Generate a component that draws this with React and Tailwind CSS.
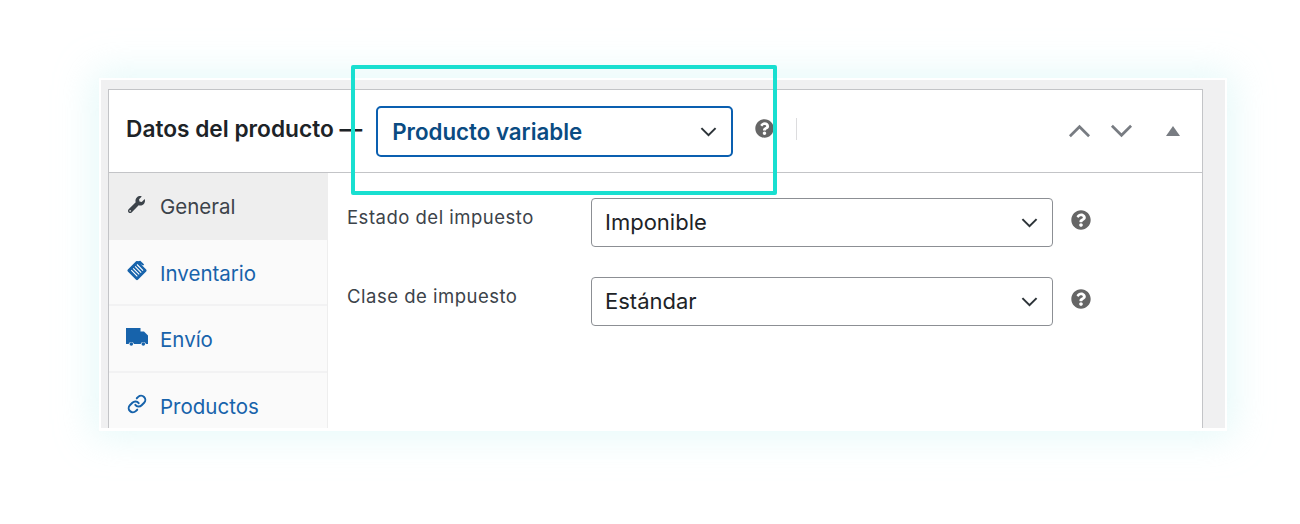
import React from "react";
import { FaWrench, FaQuestionCircle } from "react-icons/fa";
import { Link } from "lucide-react";

const Chevron = ({ className, up }) => (
  <svg viewBox="0 0 24 14" className={className} fill="none" stroke="currentColor" strokeWidth="2.8">
    <path d={up ? "M2 12.5 12 2.500l10 10" : "M2 1.500l10 10 10-10"} />
  </svg>
);

const SelectBox = ({ label }) => (
  <div className="flex h-[49px] w-[462px] items-center justify-between rounded-[4px] border border-[#8c8f94] bg-white pl-[13px] pr-[14px] text-[22px] text-[#1d2327]">
    <span>{label}</span>
    <Chevron className="h-[10px] w-[17px] text-[#2c3338]" />
  </div>
);

const Row = ({ label, value }) => (
  <div className="flex items-start">
    <div className="w-[244px] pt-[7px] text-[18.500px] leading-[24px] tracking-[0.5px] text-[#3c434a]">{label}</div>
    <SelectBox label={value} />
    <FaQuestionCircle className="ml-[18px] mt-[12px] text-[20px] text-[#666]" />
  </div>
);

const TagIcon = () => (
  <svg viewBox="0 0 20 20" className="h-[22px] w-[22px]">
    <rect x="3.500" y="4" width="13" height="13" rx="1.200" transform="rotate(45 10 10.500)" fill="#1763ab" />
    <path d="M9 2.500 13 1.500l3.500 3.500-1 1z" fill="#1763ab" />
    <path d="m6.500 8.500 5.500 5.500M8.300 6.800l5.500 5.500M10 5l5.500 5.500M4.800 10.200l5.500 5.500" stroke="#fff" strokeWidth="1" fill="none" />
  </svg>
);

const TruckIcon = () => (
  <svg viewBox="0 0 22 18" className="h-[18px] w-[22px]" fill="#1763ab">
    <path d="M0 0h14.500v3.500h3.500L22 7.500v8.500h-2a2.800 2.800 0 0 0-5.400 0H8a2.800 2.800 0 0 0-5.400 0H0z" />
    <circle cx="5.300" cy="16" r="1.800" />
    <circle cx="17.300" cy="16" r="1.800" />
  </svg>
);

const NavItem = ({ icon, label, active, h, noBorder, textClass }) => (
  <div
    className={`flex items-center text-[20.500px] ${h} ${active ? "bg-[#eeeeee] text-[#3c434a]" : "text-[#1763ab]"} ${
      noBorder ? "" : "border-b-2 border-[#f2f2f3]"
    }`}
  >
    <div className="flex w-[51px] -translate-y-[2px] justify-center pl-[4px]">{icon}</div>
    <span className={textClass}>{label}</span>
  </div>
);

export default function App() {
  return (
    <div className="relative h-[524px] w-[1300px] overflow-hidden bg-white font-['Inter',sans-serif]">
      <div className="pl-[99px] pt-[78px]">
        <div className="h-[353px] w-[1128px] overflow-hidden border-x-2 border-b-[3px] border-t-2 border-white bg-[#f0f0f1] pl-[7px] pt-[9px] shadow-[0_0_36px_6px_rgba(190,240,240,0.4)]">
          <div className="h-[345px] w-[1095px] border border-[#c3c4c7] bg-white">
            <div className="flex h-[83px] items-center border-b border-[#c3c4c7] pl-[17px]">
              <div className="-translate-y-[2px] whitespace-nowrap text-[22.700px] font-semibold text-[#1d2327]">Datos del producto —</div>
              <div className="ml-[14px] flex h-[51px] w-[357px] items-center justify-between rounded-[5px] border-2 border-[#0a5fb0] pl-[14px] pr-[14px] text-[22.300px] font-semibold text-[#0a4b82]">
                <span className="translate-y-[1px]">Producto variable</span>
                <Chevron className="h-[10px] w-[17px] translate-y-[1px] text-[#2c3338]" />
              </div>
              <FaQuestionCircle className="ml-[22px] -translate-y-[3px] text-[19px] text-[#666]" />
              <div className="ml-[22px] h-[22px] w-px -translate-y-[2px] bg-[#dcdcde]" />
              <div className="ml-auto flex items-center pr-[22px] text-[#787c82]">
                <Chevron up className="h-[14px] w-[23px]" />
                <Chevron className="ml-[19px] h-[14px] w-[23px]" />
                <div className="ml-[33px] h-0 w-0 border-x-[7px] border-b-[10px] border-x-transparent border-b-[#787c82]" />
              </div>
            </div>
            <div className="flex">
              <div className="w-[219px] shrink-0 border-r border-[#eeeeee] bg-[#fafafa]">
                <NavItem active h="h-[67px]" noBorder textClass="translate-y-[1px]" label="General" icon={<FaWrench className="text-[17px] text-[#3c434a]" />} />
                <NavItem h="h-[66px]" textClass="translate-y-[2px]" label="Inventario" icon={<TagIcon />} />
                <NavItem h="h-[67px]" textClass="translate-y-[2px]" label="Envío" icon={<TruckIcon />} />
                <NavItem h="h-[66px]" noBorder textClass="translate-y-[1px]" label="Productos" icon={<Link size={20} strokeWidth={2.4} className="text-[#1763ab]" />} />
              </div>
              <div className="flex flex-col gap-[30px] pl-[19px] pt-[25px]">
                <Row label="Estado del impuesto" value="Imponible" />
                <Row label="Clase de impuesto" value="Estándar" />
              </div>
            </div>
          </div>
        </div>
      </div>
      <div className="absolute left-[351px] top-[65px] h-[130px] w-[426px] rounded-[2px] border-[4px] border-[#19dfd0]" />
    </div>
  );
}
